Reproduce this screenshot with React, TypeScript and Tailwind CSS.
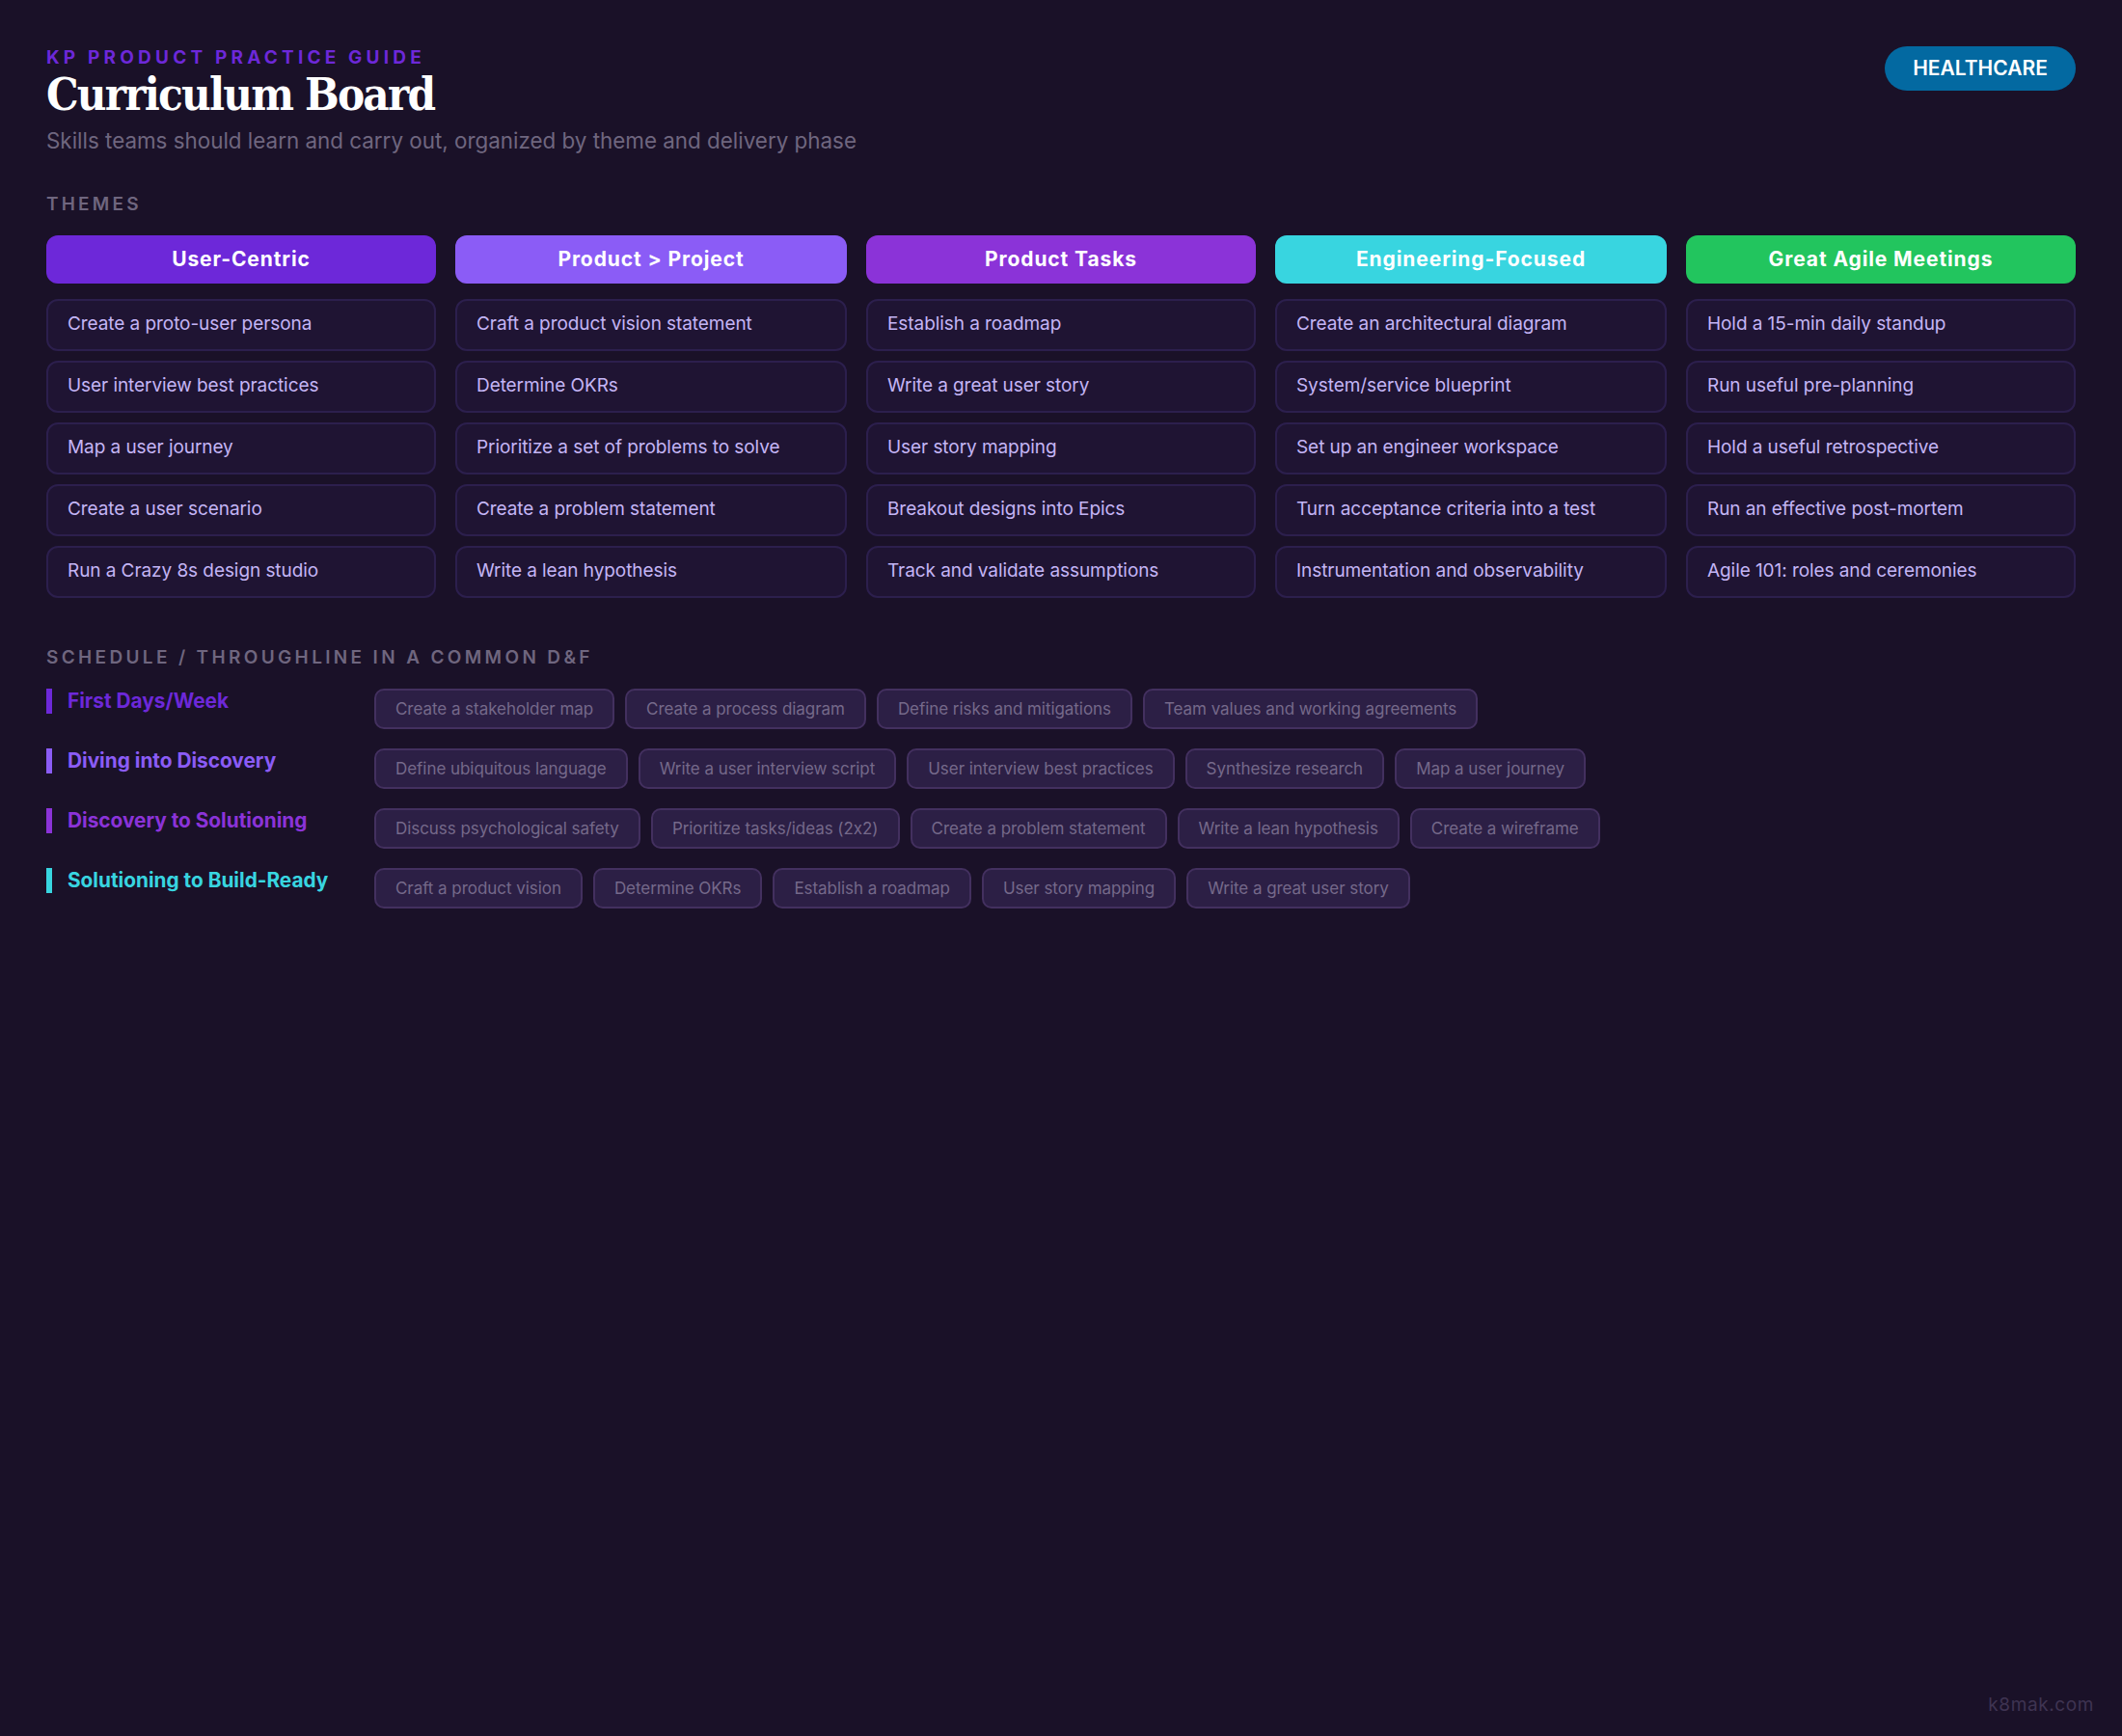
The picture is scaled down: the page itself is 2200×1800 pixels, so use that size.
const themes = [
  {
    name: 'User-Centric',
    color: 'bg-[#6d28d9]',
    items: ['Create a proto-user persona', 'User interview best practices', 'Map a user journey', 'Create a user scenario', 'Run a Crazy 8s design studio'],
  },
  {
    name: 'Product > Project',
    color: 'bg-[#8b5cf6]',
    items: ['Craft a product vision statement', 'Determine OKRs', 'Prioritize a set of problems to solve', 'Create a problem statement', 'Write a lean hypothesis'],
  },
  {
    name: 'Product Tasks',
    color: 'bg-[#8b33d8]',
    items: ['Establish a roadmap', 'Write a great user story', 'User story mapping', 'Breakout designs into Epics', 'Track and validate assumptions'],
  },
  {
    name: 'Engineering-Focused',
    color: 'bg-[#38d5e0]',
    items: ['Create an architectural diagram', 'System/service blueprint', 'Set up an engineer workspace', 'Turn acceptance criteria into a test', 'Instrumentation and observability'],
  },
  {
    name: 'Great Agile Meetings',
    color: 'bg-[#22c55e]',
    items: ['Hold a 15-min daily standup', 'Run useful pre-planning', 'Hold a useful retrospective', 'Run an effective post-mortem', 'Agile 101: roles and ceremonies'],
  },
];

const schedule = [
  {
    name: 'First Days/Week',
    bar: 'bg-[#6d28d9]',
    text: 'text-[#6d28d9]',
    chips: ['Create a stakeholder map', 'Create a process diagram', 'Define risks and mitigations', 'Team values and working agreements'],
  },
  {
    name: 'Diving into Discovery',
    bar: 'bg-[#8b5cf6]',
    text: 'text-[#8b5cf6]',
    chips: ['Define ubiquitous language', 'Write a user interview script', 'User interview best practices', 'Synthesize research', 'Map a user journey'],
  },
  {
    name: 'Discovery to Solutioning',
    bar: 'bg-[#8b33d8]',
    text: 'text-[#8b33d8]',
    chips: ['Discuss psychological safety', 'Prioritize tasks/ideas (2x2)', 'Create a problem statement', 'Write a lean hypothesis', 'Create a wireframe'],
  },
  {
    name: 'Solutioning to Build-Ready',
    bar: 'bg-[#38d5e0]',
    text: 'text-[#38d5e0]',
    chips: ['Craft a product vision', 'Determine OKRs', 'Establish a roadmap', 'User story mapping', 'Write a great user story'],
  },
];

export default function App() {
  return (
    <div className="min-h-[1800px] flex flex-col bg-[#1a1128] px-12 pt-[49px] pb-5 font-['Inter',sans-serif] [font-feature-settings:'calt'_0]">
      {/* Header */}
      <div className="flex justify-between items-start">
        <div>
          <p className="text-[19px] leading-[22px] font-bold tracking-[4.2px] text-[#6d28d9]">KP PRODUCT PRACTICE GUIDE</p>
          <h1 className="text-[47px] leading-[50px] mt-[2px] font-bold tracking-[-1.8px] text-white font-['DejaVu_Serif_Condensed','DejaVu_Serif',serif]">Curriculum Board</h1>
          <p className="text-[22.4px] leading-[30px] mt-[8px] text-[#6f667f]">Skills teams should learn and carry out, organized by theme and delivery phase</p>
        </div>
        <div className="h-[46px] w-[198px] -mt-px flex items-center justify-center rounded-full bg-[#0369a1] text-[21px] font-semibold text-white">HEALTHCARE</div>
      </div>

      {/* Themes */}
      <p className="mt-[40px] text-[19px] leading-[22px] font-semibold tracking-[3.2px] text-[#6f667f]">THEMES</p>
      <div className="mt-[21px] grid grid-cols-[404px_406px_404px_406px_404px] gap-5">
        {themes.map((theme) => (
          <div key={theme.name} className="flex flex-col gap-[10px]">
            <div className={`h-[50px] mb-[6px] flex items-center justify-center rounded-[12px] text-[21px] font-bold tracking-[0.9px] text-white ${theme.color}`}>
              {theme.name}
            </div>
            {theme.items.map((item) => (
              <div key={item} className="h-[54px] pb-[2px] flex items-center px-5 rounded-[12px] border-2 border-[#2c1f4d] bg-[#1f1433] text-[19px] tracking-[-0.07px] text-[#c4b5f5]">
                {item}
              </div>
            ))}
          </div>
        ))}
      </div>

      {/* Schedule */}
      <p className="mt-[51px] text-[19px] leading-[22px] font-semibold tracking-[3.35px] text-[#6f667f]">SCHEDULE / THROUGHLINE IN A COMMON D&amp;F</p>
      <div className="mt-[21px] flex flex-col gap-5">
        {schedule.map((row) => (
          <div key={row.name} className="flex items-start">
            <div className="w-[340px] flex items-center gap-4">
              <div className={`w-[6px] h-[26px] ${row.bar}`} />
              <span className={`text-[20.8px] leading-[26px] font-bold ${row.text}`}>{row.name}</span>
            </div>
            <div className="flex gap-[11px]">
              {row.chips.map((chip) => (
                <div key={chip} className="h-[42px] pt-px flex items-center px-5 rounded-[10px] border-2 border-[#43305f] bg-[#2c1f45] text-[17px] tracking-[-0.05px] text-[#75698a]">
                  {chip}
                </div>
              ))}
            </div>
          </div>
        ))}
      </div>

      <p className="mt-auto self-end mr-[-19px] text-[19px] leading-[24px] tracking-[0.6px] text-[#3f3452]">k8mak.com</p>
    </div>
  );
}
